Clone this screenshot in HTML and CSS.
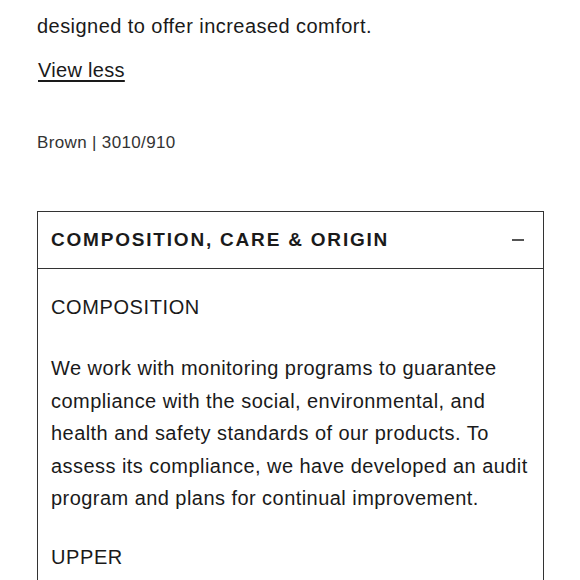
FILE: index.html
```html
<!DOCTYPE html>
<html>
<head>
<meta charset="utf-8">
<link rel="stylesheet" href="styles.css">
</head>
<body>
<div class="page">
  <p class="desc">The insole is made from a technical material that has been<br>designed to offer increased comfort.</p>
  <a class="view-less" href="#">View less</a>
  <p class="ref">Brown | 3010/910</p>
  <section class="accordion">
    <div class="acc-head">
      <h2 class="acc-title">COMPOSITION, CARE &amp; ORIGIN</h2>
      <span class="minus"></span>
    </div>
    <div class="acc-body">
      <h3 class="sub">COMPOSITION</h3>
      <p class="text">We work with monitoring programs to guarantee compliance with the social, environmental, and health and safety standards of our products. To assess its compliance, we have developed an audit program and plans for continual improvement.</p>
      <h3 class="sub upper">UPPER</h3>
      <p class="text">100% polyurethane</p>
    </div>
  </section>
</div>
</body>
</html>
```
FILE: styles.css
```css
html, body {
  margin: 0;
  padding: 0;
  background: #fff;
  overflow: hidden;
}
body {
  font-family: "Liberation Sans", Arial, sans-serif;
  color: #1a1a1a;
}
.page {
  padding: 0 36px 0 37px;
}
.desc {
  margin: -26px 0 0 0;
  font-size: 20px;
  line-height: 35px;
  letter-spacing: 0.45px;
  white-space: nowrap;
}
.view-less {
  display: inline-block;
  margin-top: 14px;
  margin-left: 1px;
  font-size: 20px;
  line-height: 24px;
  letter-spacing: 0.3px;
  color: #1a1a1a;
  text-decoration: underline;
  text-underline-offset: 3px;
}
.ref {
  margin: 49px 0 0 0;
  font-size: 17px;
  line-height: 24px;
  letter-spacing: 0.35px;
  color: #333;
}
.accordion {
  margin-top: 56px;
  border: 1px solid #333;
  border-bottom: none;
}
.acc-head {
  display: flex;
  align-items: center;
  justify-content: space-between;
  height: 56px;
  padding: 0 19px 0 13px;
  border-bottom: 1px solid #333;
}
.acc-title {
  margin: 0;
  font-size: 19px;
  font-weight: bold;
  letter-spacing: 1.8px;
}
.minus {
  width: 12px;
  height: 1.5px;
  background: #555;
}
.acc-body {
  padding: 24px 13px 60px 13px;
}
.sub {
  margin: 0;
  font-size: 20px;
  font-weight: normal;
  line-height: 28px;
  letter-spacing: 0.6px;
}
.text {
  margin: 31px 0 0 0;
  font-size: 20px;
  line-height: 32.5px;
  letter-spacing: 0.45px;
}
.upper {
  margin-top: 28px;
}
```
